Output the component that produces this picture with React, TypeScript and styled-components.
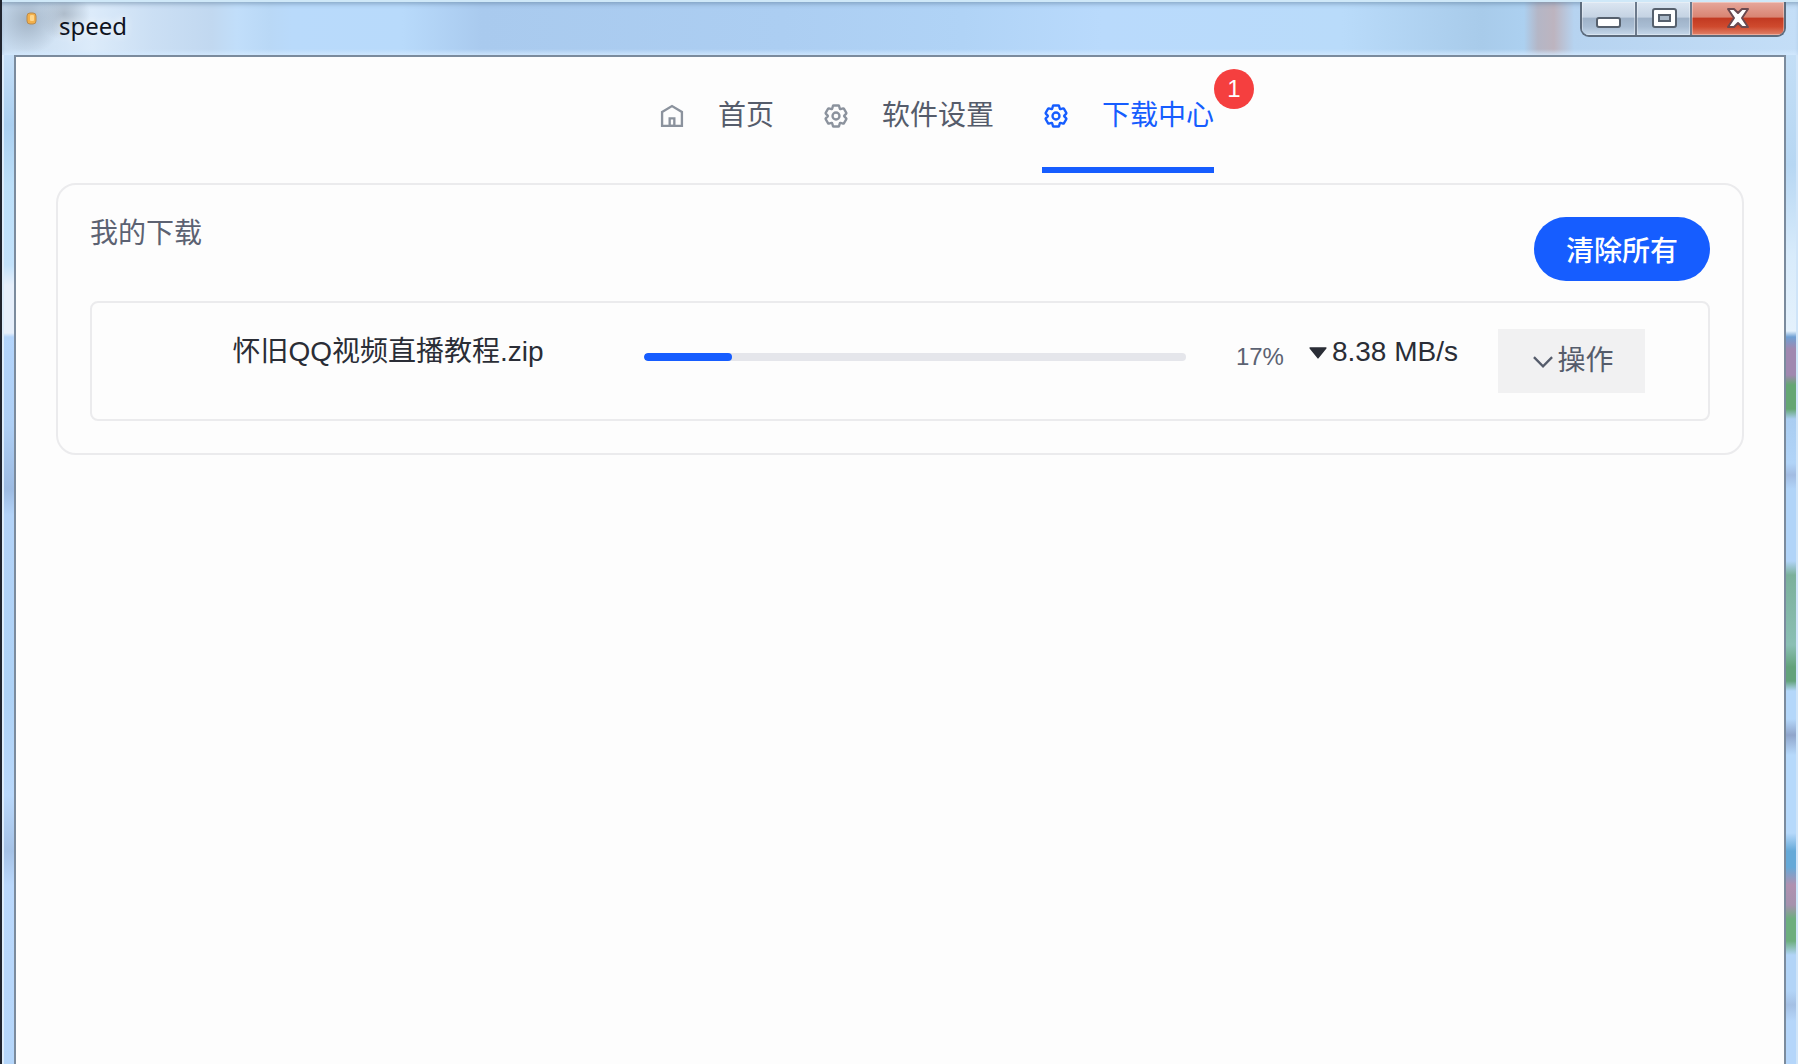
import React from "react";
import styled, { createGlobalStyle } from "styled-components";

const GlobalStyle = createGlobalStyle`
  * {
    box-sizing: border-box;
  }
  body {
    margin: 0;
    background: #fdfdfd;
    color: #2a2d36;
    font-family: "Liberation Sans", "Noto Sans CJK SC", sans-serif;
    font-size: 28px;
  }
  button {
    font: inherit;
    border: 0;
    padding: 0;
    cursor: pointer;
  }
`;

const Window = styled.div`
  display: flex;
  flex-direction: column;
  min-height: 100vh;
  border-left: 2px solid #20242e;
  background: #bcdcfb;
`;

const TitleBar = styled.header`
  display: flex;
  justify-content: space-between;
  align-items: flex-start;
  height: 55px;
  padding: 0 12px 0 24px;
  border-top: 2px solid #cfe8f8;
  box-shadow: inset 0 4px 4px -2px rgba(90, 120, 150, 0.5);
  background:
    linear-gradient(to top, rgba(212, 234, 255, 0.8), transparent 6px),
    radial-gradient(ellipse 34px 34px at 26px 18px, #a3b4c6, transparent),
    radial-gradient(ellipse 26px 26px at 62px 12px, #aebccb, transparent),
    linear-gradient(
      to right,
      #c6daee 0,
      #dcebfa 90px,
      #cbdff4 150px,
      #c1d8f0 210px,
      #c1defa 235px,
      #b9d8f6 268px,
      #b9dafb 290px,
      #b8dafb 400px,
      #a9caee 480px,
      #acceF2 780px,
      #b0d3f6 960px,
      #b9dafc 1100px,
      #b9dbfa 1340px,
      #a8cbea 1480px,
      #acd0f0 1522px,
      #b4b6c6 1536px,
      #bdb4bf 1552px,
      #b6d3f0 1572px,
      #c4def7 100%
    );
`;

const AppTitle = styled.div`
  display: flex;
  align-items: flex-start;
  gap: 22px;
`;

const AppIcon = styled.svg`
  width: 11px;
  height: 13px;
  margin-top: 10px;
`;

const AppName = styled.h1`
  margin: 0;
  padding-top: 8px;
  color: #10141f;
  font: 400 24px/32px "Noto Sans", sans-serif;
  text-shadow: 0 0 8px #fff;
`;

const WindowControls = styled.div`
  display: flex;
  height: 35px;
  border: 2px solid #5d6b7c;
  border-top: 0;
  border-radius: 0 0 9px 9px;
  overflow: hidden;
`;

const ControlButton = styled.button<{ $wide?: boolean; $danger?: boolean }>`
  display: flex;
  align-items: center;
  justify-content: center;
  width: ${(p) => (p.$wide ? 92 : 55)}px;
  padding-bottom: 2px;
  border-right: ${(p) => (p.$danger ? "0" : "2px solid #6c7a8c")};
  background: ${(p) =>
    p.$danger
      ? "linear-gradient(#e6a79b 0, #d98573 45%, #c23a22 50%, #cf4a2e 75%, #e0826a 100%)"
      : "linear-gradient(#dbe6f2 0, #c5d3e3 45%, #9fb2c8 50%, #a9bdd3 75%, #c6d8ea 100%)"};
  box-shadow: inset 0 0 0 1px rgba(255, 255, 255, 0.35);
`;

const Body = styled.div`
  display: flex;
  flex: 1;
`;

const EdgeLeft = styled.div`
  width: 12px;
  border-left: 2px solid #dcecfb;
  background: linear-gradient(
    #c6dff7 0,
    #aacff0 70px,
    #bcdff9 130px,
    #c3e2fb 210px,
    #e6effb 230px,
    #e6effb 278px,
    #b3d4fb 282px,
    #aecff5 370px,
    #9dbbe2 434px,
    #b3d3f8 460px,
    #aed2f6 640px,
    #b9d8fb 740px,
    #a5c2e6 796px,
    #bad8fc 830px,
    #b5d6fa 100%
  );
`;

const EdgeRight = styled.div`
  width: 12px;
  border-right: 2px solid #cfe4f8;
  background: linear-gradient(
    #c3def6 0,
    #b7d7f3 110px,
    #d8ebfb 200px,
    #e4f1fc 276px,
    #6f9fd3 282px,
    #a088b0 294px,
    #a088b0 320px,
    #64a673 330px,
    #64a673 354px,
    #aacdf1 364px,
    #b1d4f8 408px,
    #a2bce2 420px,
    #b1d4f8 434px,
    #b1d4f8 506px,
    #7bb09b 520px,
    #8abfb4 590px,
    #62a27b 612px,
    #62a27b 626px,
    #b4d7fa 636px,
    #b4d7fa 664px,
    #8fa5cb 680px,
    #b6d9fb 700px,
    #b6d9fb 778px,
    #65a9d8 796px,
    #65a9d8 812px,
    #b091b0 830px,
    #a592ae 850px,
    #6cae7e 864px,
    #6cae7e 886px,
    #b2d4f7 900px,
    #b2d4f7 936px,
    #a4c0e4 950px,
    #b5d6fa 966px,
    #b5d6fa 100%
  );
`;

const Content = styled.main`
  flex: 1;
  min-width: 0;
  padding: 0 40px;
  border: 2px solid #7b8b9d;
  border-bottom: 0;
  background: #fdfdfd;
`;

const Nav = styled.nav`
  display: flex;
  justify-content: center;
  gap: 48px;
  height: 126px;
  padding: 8px 0 10px 72px;
`;

const NavLink = styled.a<{ $active?: boolean }>`
  position: relative;
  display: flex;
  align-items: center;
  gap: 32px;
  border-bottom: 6px solid ${(p) => (p.$active ? "#165dff" : "transparent")};
  color: ${(p) => (p.$active ? "#165dff" : "#555c6b")};
  line-height: 44px;
  text-decoration: none;
  white-space: nowrap;

  svg {
    color: ${(p) => (p.$active ? "#165dff" : "#8b929d")};
  }
`;

const Badge = styled.span`
  position: absolute;
  top: 4px;
  left: 100%;
  width: 40px;
  height: 40px;
  border-radius: 50%;
  background: #f53f3f;
  color: #fff;
  font-size: 24px;
  line-height: 40px;
  text-align: center;
`;

const Card = styled.section`
  padding: 32px;
  border: 2px solid #ebebed;
  border-radius: 20px;
`;

const CardHeader = styled.div`
  display: flex;
  align-items: flex-start;
  justify-content: space-between;
  margin-bottom: 20px;
`;

const CardTitle = styled.h2`
  margin: 0;
  color: #5c6272;
  font-size: 28px;
  font-weight: 400;
  line-height: 34px;
`;

const ClearButton = styled.button`
  height: 64px;
  padding: 0 32px;
  border-radius: 32px;
  background: #165dff;
  color: #fff;
  font-weight: 500;
`;

const DownloadItem = styled.article`
  display: flex;
  align-items: flex-start;
  height: 120px;
  padding: 26px 63px 26px 40px;
  border: 2px solid #ebebed;
  border-radius: 8px;
  line-height: 46px;
`;

const FileName = styled.div`
  flex: 4;
  text-align: center;
  white-space: nowrap;
`;

const ProgressGroup = styled.div`
  display: flex;
  flex: 5;
  align-items: center;
  gap: 50px;
  height: 56px;
  margin-right: 20px;
`;

const Track = styled.div`
  flex: 1;
  height: 8px;
  border-radius: 4px;
  background: #e5e6eb;
  overflow: hidden;
`;

const Fill = styled.div`
  height: 100%;
  border-radius: 4px;
  background: #165dff;
`;

const Percent = styled.span`
  color: #5c6272;
  font-size: 24px;
`;

const Speed = styled.div`
  display: flex;
  align-items: center;
  margin-right: 40px;
  white-space: nowrap;
`;

const ActionButton = styled.button`
  display: flex;
  align-items: center;
  justify-content: center;
  width: 147px;
  height: 64px;
  background: #f1f1f2;
  color: #555c6b;
`;

const Icon = styled.svg`
  flex: none;
  width: 28px;
  height: 28px;
  fill: none;
  stroke: currentColor;
  stroke-width: 4;
`;

const HomeIcon = () => (
  <Icon viewBox="0 0 48 48" aria-hidden="true">
    <path d="M7 17 24 7l17 10v24H7V17Z" />
    <path d="M20 28h8v13h-8V28Z" />
  </Icon>
);

const SettingsIcon = () => (
  <Icon viewBox="0 0 48 48" aria-hidden="true">
    <path d="M18.797 6.732A1 1 0 0 1 19.76 6h8.48a1 1 0 0 1 .964.732l1.285 4.628a1 1 0 0 0 1.213.7l4.651-1.2a1 1 0 0 1 1.116.468l4.24 7.344a1 1 0 0 1-.153 1.2L38.193 23.3a1 1 0 0 0 0 1.402l3.364 3.427a1 1 0 0 1 .153 1.2l-4.24 7.344a1 1 0 0 1-1.116.468l-4.65-1.2a1 1 0 0 0-1.214.7l-1.285 4.628a1 1 0 0 1-.964.732h-8.48a1 1 0 0 1-.963-.732L17.51 36.64a1 1 0 0 0-1.213-.7l-4.65 1.2a1 1 0 0 1-1.116-.468l-4.24-7.344a1 1 0 0 1 .153-1.2L9.809 24.7a1 1 0 0 0 0-1.402l-3.364-3.427a1 1 0 0 1-.153-1.2l4.24-7.344a1 1 0 0 1 1.116-.468l4.65 1.2a1 1 0 0 0 1.213-.7l1.286-4.628Z" />
    <path d="M30 24a6 6 0 1 1-12 0 6 6 0 0 1 12 0Z" />
  </Icon>
);

const CaretDownIcon = () => (
  <Icon viewBox="0 0 48 48" aria-hidden="true">
    <path
      fill="currentColor"
      stroke="none"
      d="M24.938 34.83a1.2 1.2 0 0 1-1.876 0L9.56 17.949c-.628-.785-.069-1.949.937-1.949h27.007c1.006 0 1.565 1.164.937 1.95L24.938 34.829Z"
    />
  </Icon>
);

const ChevronIcon = () => (
  <Icon viewBox="0 0 48 48" aria-hidden="true">
    <path d="M39.6 17.443 24.043 33 8.487 17.443" />
  </Icon>
);

const MinimizeGlyph = () => (
  <svg width="26" height="22" viewBox="0 0 26 22" aria-hidden="true">
    <rect x="1" y="11" width="23" height="9" rx="2" fill="#fff" stroke="#56606d" strokeWidth="2" />
  </svg>
);

const MaximizeGlyph = () => (
  <svg width="26" height="22" viewBox="0 0 26 22" aria-hidden="true">
    <rect x="2" y="2" width="23" height="18" rx="2" fill="#fff" stroke="#56606d" strokeWidth="2" />
    <rect x="8" y="8" width="11" height="6" fill="#a9b8c8" stroke="#56606d" strokeWidth="2" />
  </svg>
);

const CloseGlyph = () => (
  <svg width="24" height="20" viewBox="0 0 24 20" aria-hidden="true">
    <path
      d="M2 1h6l4 4 4-4h6l-6 9 6 9h-6l-4-4-4 4H2l6-9Z"
      fill="#fff"
      stroke="#6b4a50"
      strokeWidth="2"
      strokeLinejoin="round"
    />
  </svg>
);

const navItems = [
  { label: "首页", icon: HomeIcon, active: false, count: 0 },
  { label: "软件设置", icon: SettingsIcon, active: false, count: 0 },
  { label: "下载中心", icon: SettingsIcon, active: true, count: 1 },
];

const downloads = [
  { name: "怀旧QQ视频直播教程.zip", progress: 0.162, percent: "17%", speed: "8.38 MB/s" },
];

export default function App() {
  return (
    <>
      <GlobalStyle />
      <Window>
        <TitleBar>
          <AppTitle>
            <AppIcon viewBox="0 0 11 13" aria-hidden="true">
              <rect x="1" y="1" width="9" height="11" rx="3" fill="#f3b04a" stroke="#b98a4c" />
              <rect x="4" y="3" width="4" height="6" rx="1" fill="#ffd68a" />
            </AppIcon>
            <AppName>speed</AppName>
          </AppTitle>
          <WindowControls>
            <ControlButton type="button" aria-label="最小化">
              <MinimizeGlyph />
            </ControlButton>
            <ControlButton type="button" aria-label="最大化">
              <MaximizeGlyph />
            </ControlButton>
            <ControlButton type="button" aria-label="关闭" $wide $danger>
              <CloseGlyph />
            </ControlButton>
          </WindowControls>
        </TitleBar>
        <Body>
          <EdgeLeft />
          <Content>
            <Nav>
              {navItems.map(({ label, icon: NavIcon, active, count }) => (
                <NavLink
                  key={label}
                  href="#"
                  $active={active}
                  aria-current={active ? "page" : undefined}
                >
                  <NavIcon />
                  {label}
                  {count > 0 && <Badge>{count}</Badge>}
                </NavLink>
              ))}
            </Nav>
            <Card>
              <CardHeader>
                <CardTitle>我的下载</CardTitle>
                <ClearButton type="button">清除所有</ClearButton>
              </CardHeader>
              {downloads.map((item) => (
                <DownloadItem key={item.name}>
                  <FileName>{item.name}</FileName>
                  <ProgressGroup>
                    <Track role="progressbar" aria-label={item.name} aria-valuenow={17}>
                      <Fill style={{ width: `${item.progress * 100}%` }} />
                    </Track>
                    <Percent>{item.percent}</Percent>
                  </ProgressGroup>
                  <Speed>
                    <CaretDownIcon />
                    {item.speed}
                  </Speed>
                  <ActionButton type="button">
                    <ChevronIcon />
                    操作
                  </ActionButton>
                </DownloadItem>
              ))}
            </Card>
          </Content>
          <EdgeRight />
        </Body>
      </Window>
    </>
  );
}
